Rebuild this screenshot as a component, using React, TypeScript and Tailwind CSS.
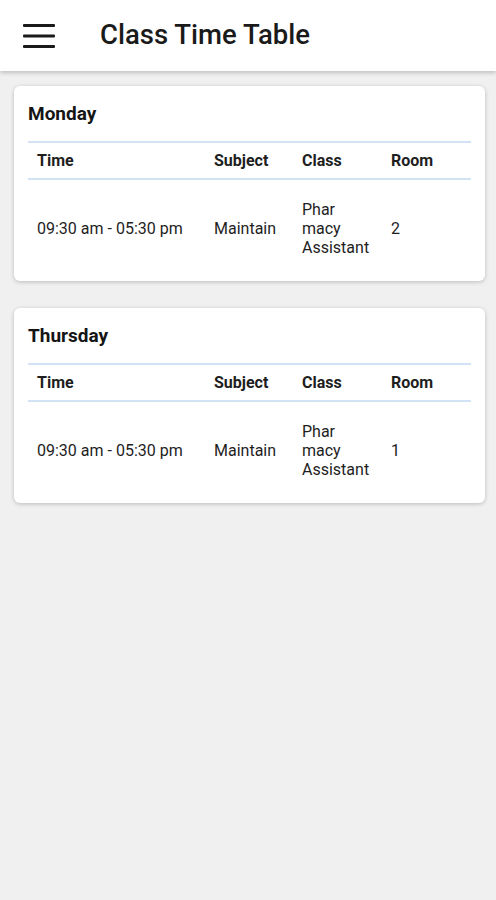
import React from 'react';

type Entry = {
  time: string;
  subject: string;
  classLines: string[];
  room: string;
};

type Day = {
  day: string;
  entries: Entry[];
};

const schedule: Day[] = [
  {
    day: 'Monday',
    entries: [{ time: '09:30 am - 05:30 pm', subject: 'Maintain', classLines: ['Phar', 'macy', 'Assistant'], room: '2' }],
  },
  {
    day: 'Thursday',
    entries: [{ time: '09:30 am - 05:30 pm', subject: 'Maintain', classLines: ['Phar', 'macy', 'Assistant'], room: '1' }],
  },
];

const MenuIcon: React.FC = () => (
  <svg width="34" height="26" viewBox="0 0 34 26" className="block">
    <rect x="1" y="1" width="32" height="3" rx="1" fill="#1a1a1a" />
    <rect x="1" y="11.5" width="32" height="3" rx="1" fill="#1a1a1a" />
    <rect x="1" y="22" width="32" height="3" rx="1" fill="#1a1a1a" />
  </svg>
);

const DayCard: React.FC<{ data: Day }> = ({ data }) => (
  <div className="bg-white rounded-[6px] shadow-[0_1px_4px_rgba(0,0,0,0.22)] px-[14px] pt-[16px] pb-[4px]">
    <h2 className="text-[19px] leading-[24px] font-bold text-[#151515] mb-[15px]">{data.day}</h2>
    <table className="w-full table-fixed border-collapse text-[16px] text-[#1e1e1e]">
      <colgroup>
        <col className="w-[177px]" />
        <col className="w-[88px]" />
        <col className="w-[89px]" />
        <col />
      </colgroup>
      <thead>
        <tr className="border-t-2 border-b-2 border-[#d3e3f6]">
          <th className="text-left font-bold px-[9px] h-[37px] leading-[20px]">Time</th>
          <th className="text-left font-bold px-[9px] h-[37px] leading-[20px]">Subject</th>
          <th className="text-left font-bold px-[9px] h-[37px] leading-[20px]">Class</th>
          <th className="text-left font-bold px-[9px] h-[37px] leading-[20px]">Room</th>
        </tr>
      </thead>
      <tbody>
        {data.entries.map((e, i) => (
          <tr key={i}>
            <td className="px-[9px] py-[20px] leading-[19px] align-middle whitespace-nowrap">{e.time}</td>
            <td className="px-[9px] py-[20px] leading-[19px] align-middle">{e.subject}</td>
            <td className="px-[9px] py-[20px] leading-[19px] align-middle">
              {e.classLines.map((l, j) => (
                <div key={j}>{l}</div>
              ))}
            </td>
            <td className="px-[9px] py-[20px] leading-[19px] align-middle">{e.room}</td>
          </tr>
        ))}
      </tbody>
    </table>
  </div>
);

const App: React.FC = () => {
  return (
    <div className="min-h-[900px] bg-[#f0f0f0]" style={{ fontFamily: 'Roboto, "Liberation Sans", sans-serif' }}>
      <header className="h-[71px] bg-white flex items-center shadow-[0_2px_4px_rgba(0,0,0,0.2)] relative">
        <div className="pl-[22px] w-[100px]">
          <MenuIcon />
        </div>
        <h1 className="text-[27.5px] font-medium text-[#1a1a1a] leading-none -mt-[2px]">Class Time Table</h1>
      </header>
      <main className="pl-[14px] pr-[11px] pt-[15px] flex flex-col gap-[27px]">
        {schedule.map((d) => (
          <DayCard key={d.day} data={d} />
        ))}
      </main>
    </div>
  );
};

export default App;
